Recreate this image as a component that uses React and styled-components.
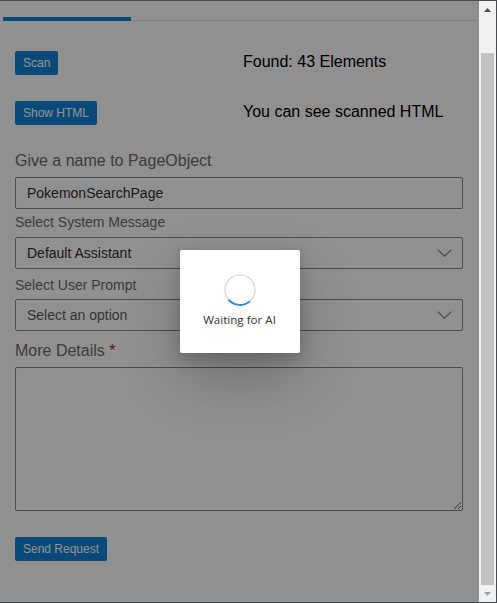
import React, { useLayoutEffect, useRef } from "react";
import styled, { createGlobalStyle } from "styled-components";

const GlobalStyle = createGlobalStyle`
  html, body {
    margin: 0;
    padding: 0;
    height: 100%;
  }
  body {
    font-family: "Liberation Sans", Arial, sans-serif;
    background: #fff;
    overflow: hidden;
  }
`;

const Frame = styled.div`
  display: flex;
  width: 497px;
  height: 603px;
  box-sizing: border-box;
  border-top: 1px solid #454b4f;
  border-right: 1px solid #454b4f;
  border-bottom: 1px solid #454b4f;
  background: #fff;
`;

const Viewport = styled.div`
  position: relative;
  flex: 1;
  min-width: 0;
`;

const Scroller = styled.div`
  height: 100%;
  overflow: hidden;
`;

const Page = styled.div`
  padding: 0 3px 43px;
`;

const TabBar = styled.div`
  display: flex;
  height: 60px;
  box-shadow: inset 0 -1px 0 #e1e1e1;
`;

const Tab = styled.div`
  box-sizing: border-box;
  height: 60px;
  padding: 0 15.5px 16px;
  display: flex;
  align-items: flex-end;
  font-size: 14px;
  line-height: 16px;
  white-space: nowrap;
  color: ${(p) => (p.$active ? "#1383da" : "#323130")};
  border-bottom: 4px solid ${(p) => (p.$active ? "#1383da" : "transparent")};
`;

const Body = styled.div`
  padding: 30px 13px 0 12px;
`;

const ActionGrid = styled.div`
  display: grid;
  grid-template-columns: 228px 1fr;
  grid-auto-rows: 24px;
  row-gap: 26px;
`;

const PrimaryButton = styled.button`
  justify-self: start;
  height: 24px;
  padding: 0 8px;
  border: none;
  border-radius: 2px;
  background: #1383da;
  color: #fff;
  font: 12px "Liberation Sans", Arial, sans-serif;
  margin-top: ${(p) => p.$mt || 0}px;
`;

const Status = styled.span`
  align-self: start;
  margin-top: 1.5px;
  font-size: 16px;
  line-height: 18px;
  color: #000;
  white-space: nowrap;
`;

const FieldLabel = styled.div`
  font-size: ${(p) => (p.$large ? 16 : 14)}px;
  line-height: ${(p) => (p.$large ? 20 : 18)}px;
  color: #6e6e6e;
  margin-top: ${(p) => p.$mt}px;
  margin-bottom: ${(p) => p.$mb}px;
`;

const Required = styled.span`
  color: #a4262c;
`;

const TextInput = styled.input`
  display: block;
  box-sizing: border-box;
  width: 100%;
  height: 32px;
  padding: 0 11px;
  border: 1px solid #8a8886;
  border-radius: 2px;
  background: #fff;
  color: #323130;
  font: 14px "Liberation Sans", Arial, sans-serif;
  outline: none;
`;

const Select = styled.div`
  box-sizing: border-box;
  height: 32px;
  display: flex;
  align-items: center;
  justify-content: space-between;
  padding: 0 10px 0 11px;
  border: 1px solid #8a8886;
  border-radius: 2px;
  font-size: 14px;
  color: ${(p) => (p.$placeholder ? "#605e5c" : "#323130")};
`;

const TextArea = styled.textarea`
  display: block;
  box-sizing: border-box;
  width: 100%;
  height: 144px;
  border: 1px solid #8a8886;
  border-radius: 2px;
  resize: vertical;
  font: 14px "Liberation Sans", Arial, sans-serif;
  outline: none;
`;

const Overlay = styled.div`
  position: absolute;
  inset: 0;
  background: rgba(0, 0, 0, 0.435);
  display: flex;
  align-items: center;
  justify-content: center;
`;

const Dialog = styled.div`
  box-sizing: border-box;
  width: 120px;
  height: 103px;
  margin-top: -1px;
  padding-top: 24px;
  display: flex;
  flex-direction: column;
  align-items: center;
  gap: 6px;
  background: #fff;
  border-radius: 2px;
  box-shadow: 0 25.6px 57.6px rgba(0, 0, 0, 0.22),
    0 4.8px 14.4px rgba(0, 0, 0, 0.18);
`;

const SpinnerLabel = styled.div`
  font: 11.6px/16px "Open Sans", "Noto Sans", sans-serif;
  color: #323130;
  white-space: nowrap;
`;

const Scrollbar = styled.div`
  width: 17px;
  flex: none;
  display: flex;
  flex-direction: column;
  background: #f0f0f0;
`;

const ScrollArrow = styled.div`
  height: 17px;
  flex: none;
  display: flex;
  align-items: center;
  justify-content: center;
`;

const Track = styled.div`
  flex: 1;
  padding: 0 2px;
`;

const Thumb = styled.div`
  background: #c1c1c1;
`;

const Chevron = () => (
  <svg width="15" height="8" viewBox="0 0 15 8">
    <polyline
      points="0.6,0.6 7.5,7.2 14.4,0.6"
      fill="none"
      stroke="#8a8886"
      strokeWidth="1.3"
    />
  </svg>
);

const Spinner = () => (
  <svg width="32" height="32" viewBox="0 0 32 32">
    <circle cx="16" cy="16" r="15" fill="none" stroke="#dedede" strokeWidth="1.6" />
    <path
      d="M26.04 27.15 A15 15 0 0 1 4.51 25.64"
      fill="none"
      stroke="#2b88d8"
      strokeWidth="1.8"
    />
  </svg>
);

export default function App() {
  const scrollRef = useRef(null);

  useLayoutEffect(() => {
    if (scrollRef.current) scrollRef.current.scrollTop = 40;
  }, []);

  return (
    <>
      <GlobalStyle />
      <Frame>
        <Viewport>
          <Scroller ref={scrollRef}>
            <Page>
              <TabBar>
                <Tab $active>Scanner (POM)</Tab>
                <Tab>Generated Test Scripts</Tab>
                <Tab>Messages</Tab>
              </TabBar>
              <Body>
                <ActionGrid>
                  <PrimaryButton>Scan</PrimaryButton>
                  <Status>Found: 43 Elements</Status>
                  <PrimaryButton>Show HTML</PrimaryButton>
                  <Status>You can see scanned HTML</Status>
                </ActionGrid>

                <FieldLabel $large $mt={26} $mb={6}>
                  Give a name to PageObject
                </FieldLabel>
                <TextInput readOnly value="PokemonSearchPage" />

                <FieldLabel $mt={4} $mb={6}>
                  Select System Message
                </FieldLabel>
                <Select>
                  <span>Default Assistant</span>
                  <Chevron />
                </Select>

                <FieldLabel $mt={7} $mb={5}>
                  Select User Prompt
                </FieldLabel>
                <Select $placeholder>
                  <span>Select an option</span>
                  <Chevron />
                </Select>

                <FieldLabel $large $mt={10} $mb={6}>
                  More Details <Required>*</Required>
                </FieldLabel>
                <TextArea />

                <PrimaryButton $mt={26}>Send Request</PrimaryButton>
              </Body>
            </Page>
          </Scroller>
          <Overlay>
            <Dialog>
              <Spinner />
              <SpinnerLabel>Waiting for AI</SpinnerLabel>
            </Dialog>
          </Overlay>
        </Viewport>
        <Scrollbar>
          <ScrollArrow>
            <svg width="7" height="4" viewBox="0 0 7 4">
              <polygon points="0,4 3.5,0 7,4" fill="#505050" />
            </svg>
          </ScrollArrow>
          <Track>
            <Thumb style={{ marginTop: 35, height: 532 }} />
          </Track>
          <ScrollArrow>
            <svg width="7" height="4" viewBox="0 0 7 4">
              <polygon points="0,0 7,0 3.5,4" fill="#a3a3a3" />
            </svg>
          </ScrollArrow>
        </Scrollbar>
      </Frame>
    </>
  );
}
